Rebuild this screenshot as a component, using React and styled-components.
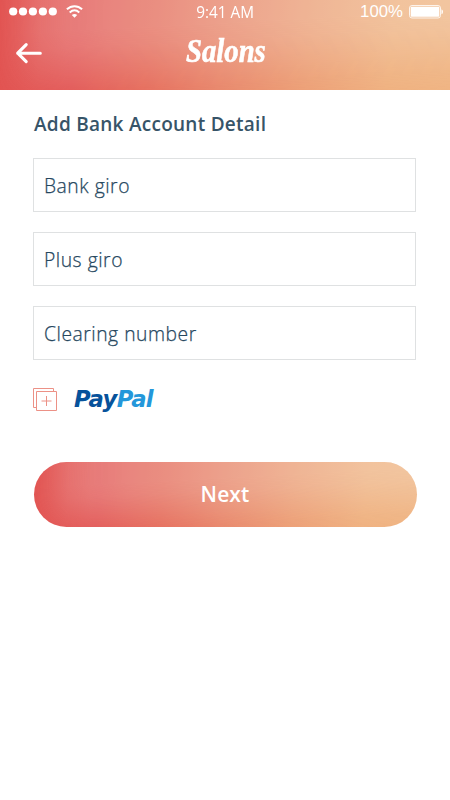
import React from "react";
import styled, { createGlobalStyle, css } from "styled-components";

const GlobalStyle = createGlobalStyle`
  * { box-sizing: border-box; }
  body { margin: 0; background: #fff; font-family: "Open Sans", "Noto Sans", sans-serif; }
`;

const warmGlow = css`
  position: relative;
  isolation: isolate;
  overflow: hidden;
  background: linear-gradient(98deg, #e25250 0%, #e35755 18%, #e66c5b 34%, #e9866a 50%, #ed9f76 68%, #f0b281 86%, #f0b584 100%);
  &::before {
    content: "";
    position: absolute;
    inset: 0;
    z-index: -1;
    background: rgba(246, 246, 242, 0.25);
    mask-image: linear-gradient(92deg, rgba(0, 0, 0, 0.05) 0%, rgba(0, 0, 0, 0.3) 4%, rgba(0, 0, 0, 0.7) 9%, rgba(0, 0, 0, 0.92) 15%, #000 24%),
      linear-gradient(177deg, #000 30%, rgba(0, 0, 0, 0.88) 45%, rgba(0, 0, 0, 0.55) 64%, rgba(0, 0, 0, 0.18) 84%, transparent 100%);
    mask-composite: intersect;
  }
`;

const Screen = styled.div`
  width: 450px;
  height: 800px;
  background: #fff;
  overflow: hidden;
`;

const Header = styled.header`
  ${warmGlow}
  height: 90px;
  color: #fff;
`;

const StatusBar = styled.div`
  height: 23px;
  display: grid;
  grid-template-columns: 1fr 60px 1fr;
  align-items: center;
  padding: 0 7px 0 9px;
`;

const Signal = styled.div`
  display: flex;
  align-items: center;
  gap: 9px;
`;

const Time = styled.span`
  margin-left: -2px;
  font: 400 16.5px/23px "Open Sans", sans-serif;
  white-space: nowrap;
  text-align: center;
  transform: scaleX(0.93);
`;

const Power = styled.div`
  display: flex;
  align-items: center;
  justify-content: flex-end;
  gap: 5px;
  font: 400 16.8px/23px "Liberation Sans", sans-serif;
`;

const NavBar = styled.div`
  display: grid;
  grid-template-columns: 60px 1fr 60px;
  height: 58px;
`;

const BackButton = styled.button`
  display: flex;
  align-items: flex-start;
  padding: 19px 0 0 15px;
  border: 0;
  background: none;
  color: inherit;
`;

const Brand = styled.h1`
  margin: 0;
  padding-left: 2px;
  text-align: center;
  font: italic 700 33px/56px "Liberation Serif", serif;
  -webkit-text-stroke: 0.6px #fff;
  transform: scaleX(0.87);
`;

const Content = styled.main`
  padding: 21px 34px 0 33px;
  color: #375468;
`;

const Title = styled.h2`
  margin: 0 0 20px;
  padding-left: 1px;
  font-size: 19px;
  line-height: 27px;
  font-weight: 600;
  letter-spacing: 0.26px;
`;

const Form = styled.form`
  display: flex;
  flex-direction: column;
`;

const Field = styled.label`
  height: 54px;
  margin-bottom: 20px;
  padding: 0 10px;
  border: 1px solid #dfe1e2;
  color: #26475e;
  font-size: 19.3px;
  line-height: 53px;
  font-weight: 300;
  letter-spacing: 0.53px;
  -webkit-text-stroke: 0.25px #26475e;
`;

const PaymentRow = styled.div`
  display: flex;
  align-items: flex-start;
  gap: 17px;
  height: 82px;
  padding-top: 7px;
`;

const PayPal = styled.span`
  font: italic 700 22.7px/25px "DejaVu Sans", sans-serif;
  letter-spacing: -0.65px;
  color: #07529b;
  em { color: #2497da; }
`;

const NextButton = styled.button`
  ${warmGlow}
  width: 383px;
  height: 65px;
  margin-left: 1px;
  border: 0;
  border-radius: 33px;
  color: #fff;
  font: 600 21px/65px "Open Sans", sans-serif;
  letter-spacing: 0.1px;
  padding: 0 1px 0 0;
`;

const SignalIcon = () => (
  <svg width="48" height="9" fill="#fff">
    {[4.2, 14, 23.9, 33.9, 43.8].map((x) => <circle key={x} cx={x} cy="4.5" r="4.1" />)}
  </svg>
);

const WifiIcon = () => (
  <svg width="17" height="14" viewBox="0 0 17 14" fill="none" stroke="#fff" strokeWidth="2">
    <path d="M.9 4.3C5.4.2 11.6.2 16.1 4.3M3.7 7.4C6.6 4.9 10.4 4.9 13.3 7.4" />
    <path d="M8.5 12.7 5.8 10.1Q8.5 8 11.2 10.1Z" fill="#fff" stroke="none" />
  </svg>
);

const BatteryIcon = () => (
  <svg width="35" height="14" viewBox="0 0 35 14">
    <rect x="1.5" y=".5" width="31" height="12.5" rx="2.5" fill="none" stroke="#fff" strokeOpacity=".8" />
    <rect x="2.7" y="1.7" width="28.6" height="10" rx="1" fill="#fff" />
    <path d="M33.5 4.2Q35 4.7 35 6.7T33.5 9.2Z" fill="#fff" />
  </svg>
);

const ArrowIcon = () => (
  <svg width="28" height="22" viewBox="0 0 28 22" fill="none" stroke="#fff" strokeWidth="3.1" strokeLinecap="round" strokeLinejoin="round">
    <path d="M25.3 11.2H2.7M11.2 2.6 2.7 11.2 11.2 19.6" />
  </svg>
);

const AddIcon = () => (
  <svg width="24" height="24" viewBox="0 0 24 24" fill="none" stroke="#ec9186">
    <path d="M3.5 20.5H.5V1.5H20.5V4M3.5 4.5H23.5V23.5H3.5ZM13.5 9V19M8.5 14H18.5" />
  </svg>
);

export default function App() {
  return (
    <Screen>
      <GlobalStyle />
      <Header>
        <StatusBar>
          <Signal><SignalIcon /><WifiIcon /></Signal>
          <Time>9:41 AM</Time>
          <Power><span>100%</span><BatteryIcon /></Power>
        </StatusBar>
        <NavBar>
          <BackButton aria-label="Back"><ArrowIcon /></BackButton>
          <Brand>Salons</Brand>
        </NavBar>
      </Header>
      <Content>
        <Title>Add Bank Account Detail</Title>
        <Form>
          {["Bank giro", "Plus giro", "Clearing number"].map((label) => (
            <Field key={label}>{label}</Field>
          ))}
          <PaymentRow>
            <AddIcon />
            <PayPal>Pay<em>Pal</em></PayPal>
          </PaymentRow>
          <NextButton type="button">Next</NextButton>
        </Form>
      </Content>
    </Screen>
  );
}
